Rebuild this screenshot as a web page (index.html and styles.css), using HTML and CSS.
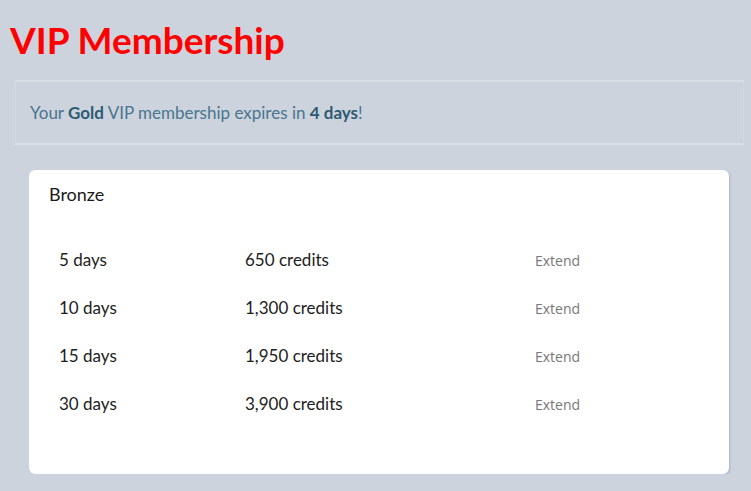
FILE: index.html
```html
<!DOCTYPE html>
<html>
<head>
<meta charset="utf-8">
<link rel="stylesheet" href="styles.css">
</head>
<body>
<h1 class="title">VIP Membership</h1>
<div class="alert"><span>Your <b>Gold</b> VIP membership expires in <b>4 days</b>!</span></div>
<div class="card">
  <div class="card-title">Bronze</div>
  <table class="plans">
    <tr><td class="c1">5 days</td><td class="c2">650 credits</td><td class="c3"><a class="extend">Extend</a></td></tr>
    <tr><td class="c1">10 days</td><td class="c2">1,300 credits</td><td class="c3"><a class="extend">Extend</a></td></tr>
    <tr><td class="c1">15 days</td><td class="c2">1,950 credits</td><td class="c3"><a class="extend">Extend</a></td></tr>
    <tr><td class="c1">30 days</td><td class="c2">3,900 credits</td><td class="c3"><a class="extend">Extend</a></td></tr>
  </table>
</div>
</body>
</html>
```
FILE: styles.css
```css
html, body {
  margin: 0;
  padding: 0;
  background: #ccd3dc;
}
body {
  padding: 0 7px 0 10px;
  font-family: Lato, "Noto Sans", sans-serif;
}
.title {
  margin: 0;
  padding-top: 18px;
  height: 80px;
  box-sizing: border-box;
  font-family: Lato, sans-serif;
  font-weight: 700;
  font-size: 37px;
  line-height: 44px;
  color: #ff0000;
}
.alert {
  margin: 0 0 0 5px;
  height: 65px;
  box-sizing: border-box;
  border-top: 2px solid #d8dfe7;
  border-bottom: 2px solid #d8dfe7;
  border-left: 1px solid #d2d9e1;
  border-right: 1px solid #d2d9e1;
  padding: 0 14px;
  display: flex;
  align-items: center;
  font-size: 17px;
  color: #4a7590;
}
.alert b {
  color: #2e5a74;
  font-weight: 700;
}
.card {
  margin: 25px 0 0 19px;
  width: 700px;
  height: 304px;
  box-sizing: border-box;
  background: #fff;
  border-radius: 6px;
  padding: 12px 20px 0 20px;
  box-shadow: 1px 1px 2px rgba(120, 110, 160, 0.35);
}
.card-title {
  font-size: 18px;
  line-height: 24px;
  color: #1a1a1a;
}
.plans {
  margin-top: 29px;
  border-collapse: collapse;
  width: 660px;
}
.plans td {
  padding: 0 10px;
  height: 48px;
  font-size: 17px;
  color: #1c1c1c;
}
.c1 { width: 166px; }
.c2 { width: 270px; }
.extend {
  font-family: "Open Sans", sans-serif;
  font-size: 14px;
  color: #777;
}
```
